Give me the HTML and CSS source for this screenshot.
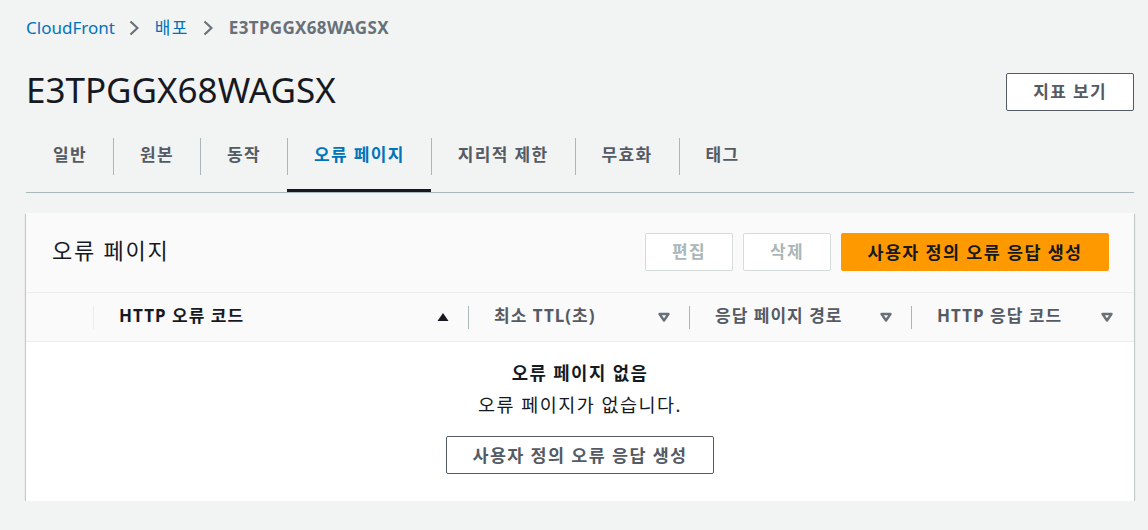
FILE: index.html
```html
<!DOCTYPE html>
<html lang="ko">
<head>
<meta charset="utf-8">
<title>E3TPGGX68WAGSX</title>
<link rel="stylesheet" href="styles.css">
</head>
<body>
<div class="page">
  <nav class="breadcrumbs">
    <a class="crumb-link" href="#">CloudFront</a>
    <svg class="chev" width="10" height="16" viewBox="0 0 10 16"><polyline points="1.5,1.5 8.5,8 1.5,14.5" fill="none" stroke="#687078" stroke-width="2.2"/></svg>
    <a class="crumb-link ko" href="#">배포</a>
    <svg class="chev" width="10" height="16" viewBox="0 0 10 16"><polyline points="1.5,1.5 8.5,8 1.5,14.5" fill="none" stroke="#687078" stroke-width="2.2"/></svg>
    <span class="crumb-current">E3TPGGX68WAGSX</span>
  </nav>

  <header class="page-header">
    <h1 class="page-title">E3TPGGX68WAGSX</h1>
    <button class="btn btn-normal">지표 보기</button>
  </header>

  <div class="tabs">
    <div class="tab"><span class="tab-label first">일반</span></div>
    <div class="tab"><span class="tab-label">원본</span></div>
    <div class="tab"><span class="tab-label">동작</span></div>
    <div class="tab active"><span class="tab-label">오류 페이지</span></div>
    <div class="tab"><span class="tab-label">지리적 제한</span></div>
    <div class="tab"><span class="tab-label">무효화</span></div>
    <div class="tab"><span class="tab-label">태그</span></div>
  </div>

  <section class="panel">
    <div class="panel-header">
      <h2 class="panel-title">오류 페이지</h2>
      <div class="actions">
        <button class="btn btn-disabled">편집</button>
        <button class="btn btn-disabled">삭제</button>
        <button class="btn btn-primary">사용자 정의 오류 응답 생성</button>
      </div>
    </div>
    <div class="table-head">
      <div class="th th-select"></div>
      <div class="th col-1"><span class="th-label sorted">HTTP 오류 코드</span>
        <svg class="sort" width="14" height="12" viewBox="0 0 14 12"><polygon points="7,2 12.5,10 1.5,10" fill="#16191f"/></svg></div>
      <div class="th col-2"><span class="th-label">최소 TTL(초)</span>
        <svg class="sort" width="14" height="12" viewBox="0 0 14 12"><polygon points="2.5,3 11.5,3 7,9.5" fill="none" stroke="#687078" stroke-width="2.4" stroke-linejoin="round"/></svg></div>
      <div class="th col-3"><span class="th-label">응답 페이지 경로</span>
        <svg class="sort" width="14" height="12" viewBox="0 0 14 12"><polygon points="2.5,3 11.5,3 7,9.5" fill="none" stroke="#687078" stroke-width="2.4" stroke-linejoin="round"/></svg></div>
      <div class="th col-4"><span class="th-label">HTTP 응답 코드</span>
        <svg class="sort" width="14" height="12" viewBox="0 0 14 12"><polygon points="2.5,3 11.5,3 7,9.5" fill="none" stroke="#687078" stroke-width="2.4" stroke-linejoin="round"/></svg></div>
    </div>
    <div class="empty">
      <p class="empty-title">오류 페이지 없음</p>
      <p class="empty-text">오류 페이지가 없습니다.</p>
      <button class="btn btn-normal btn-empty">사용자 정의 오류 응답 생성</button>
    </div>
  </section>
</div>
</body>
</html>
```

FILE: styles.css
```css
* { box-sizing: border-box; }
html, body {
  margin: 0;
  padding: 0;
  background: #f2f3f3;
  font-family: "Noto Sans", "Noto Sans CJK KR", sans-serif;
  color: #16191f;
}
.page {
  padding: 0 14px 0 26px;
}
.breadcrumbs {
  display: flex;
  align-items: center;
  height: 20px;
  margin-top: 18px;
  font-size: 17px;
  line-height: 20px;
}
.crumb-link {
  color: #0073bb;
  text-decoration: none;
}
.crumb-link.ko {
  letter-spacing: 0.08em;
}
.chev {
  margin: 0 16px 0 14px;
}
.crumb-current {
  color: #687078;
  font-weight: 700;
  letter-spacing: 0.02em;
}
.page-header {
  display: flex;
  align-items: center;
  justify-content: space-between;
  height: 38px;
  margin-top: 35px;
}
.page-title {
  margin: 0 0 4px;
  font-size: 35px;
  font-weight: 400;
  line-height: 34px;
  color: #16191f;
}
.btn {
  font-family: inherit;
  font-size: 17px;
  font-weight: 700;
  letter-spacing: 0.08em;
  height: 38px;
  padding: 0 26px;
  border-radius: 2px;
  cursor: pointer;
  line-height: 34px;
}
.btn-normal {
  background: #fff;
  border: 1px solid #545b64;
  color: #545b64;
}
.btn-disabled {
  background: #fff;
  border: 1px solid #d5dbdb;
  color: #aab7b8;
  width: 88px;
  padding: 0;
}
.btn-primary {
  background: #ff9900;
  border: 1px solid #ff9900;
  color: #16191f;
  width: 268px;
  padding: 0;
  font-size: 17.4px;
}
.tabs {
  display: flex;
  margin-top: 27px;
  border-bottom: 1px solid #aab7b8;
}
.tab {
  padding-bottom: 14px;
  border-bottom: 3px solid transparent;
}
.tab.active {
  border-bottom-color: #16191f;
}
.tab-label {
  display: block;
  height: 37px;
  line-height: 34px;
  padding: 0 26px;
  border-left: 1px solid #aab7b8;
  font-size: 17px;
  font-weight: 700;
  letter-spacing: 0.08em;
  color: #545b64;
}
.tab-label.first {
  border-left-color: transparent;
}
.tab.active .tab-label {
  color: #0073bb;
}
.panel {
  margin-top: 20px;
  background: #fff;
  box-shadow: 0 1px 1px 0 rgba(0, 28, 36, 0.3), 1px 1px 1px 0 rgba(0, 28, 36, 0.15), -1px 1px 1px 0 rgba(0, 28, 36, 0.15);
}
.panel-header {
  display: flex;
  align-items: center;
  justify-content: space-between;
  padding: 20px 25px 21px 26px;
  background: #fafafa;
  border-bottom: 1px solid #eaeded;
}
.panel-title {
  margin: 0 0 5px;
  font-size: 22px;
  font-weight: 400;
  letter-spacing: 0.08em;
  line-height: 32px;
}
.actions {
  display: flex;
  gap: 10px;
}
.table-head {
  display: grid;
  grid-template-columns: 68px 375px 221px 222px 1fr;
  height: 49px;
  background: #fafafa;
  border-bottom: 1px solid #eaeded;
  align-items: center;
}
.th {
  display: flex;
  align-items: center;
  justify-content: space-between;
  height: 23px;
  border-right: 1px solid #aab7b8;
  padding: 0 18px 0 25px;
}
.th-select {
  border-right-color: #eaeded;
}
.col-4 {
  border-right: none;
  padding-right: 20px;
}
.th-label {
  font-size: 17px;
  font-weight: 700;
  letter-spacing: 0.06em;
  color: #545b64;
  line-height: 23px;
  margin-bottom: 4px;
}
.th-label.sorted {
  color: #16191f;
}
.empty {
  display: flex;
  flex-direction: column;
  align-items: center;
  padding: 15px 0 27px;
  background: #fff;
}
.empty-title {
  margin: 0;
  font-size: 17.8px;
  font-weight: 700;
  letter-spacing: 0.08em;
  line-height: 32px;
}
.empty-text {
  margin: 0;
  font-size: 18.5px;
  letter-spacing: 0.08em;
  line-height: 32px;
  color: #16191f;
}
.btn-empty {
  margin-top: 15px;
  width: 268px;
  padding: 0;
  font-size: 17.4px;
}
```
